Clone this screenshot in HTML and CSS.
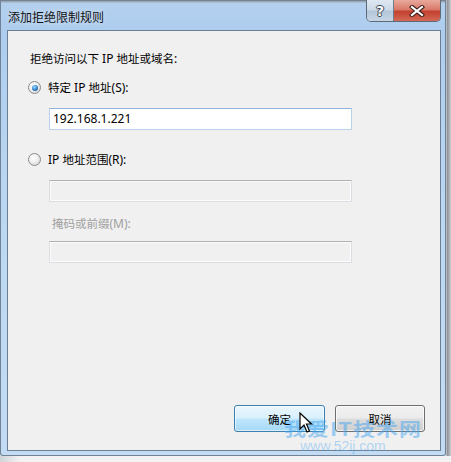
FILE: index.html
```html
<!DOCTYPE html>
<html lang="zh-CN">
<head>
<meta charset="utf-8">
<title>添加拒绝限制规则</title>
<link rel="stylesheet" href="styles.css">
</head>
<body>
<div class="desk">
  <div class="window">
    <div class="titlebar">
      <span class="title">添加拒绝限制规则</span>
      <div class="caption-btns">
        <div class="cbtn help">?</div>
        <div class="cbtn close">
          <svg width="16" height="12" viewBox="0 0 16 12">
            <path d="M3 2 L13 10 M13 2 L3 10" stroke="#3b1d1a" stroke-width="4.2" stroke-linecap="square"/>
            <path d="M3 2 L13 10 M13 2 L3 10" stroke="#ffffff" stroke-width="2.2" stroke-linecap="square"/>
          </svg>
        </div>
      </div>
    </div>
    <div class="client">
      <div class="heading"><span class="c">拒绝访问以下</span> IP <span class="c">地址或域名</span>:</div>
      <div class="radio-row"><span class="radio checked"></span><span><span class="c">特定</span> IP <span class="c">地址</span>(S):</span></div>
      <div class="input focused">192.168.1.221</div>
      <div class="radio-row r2"><span class="radio"></span><span>IP <span class="c">地址范围</span>(R):</span></div>
      <div class="input disabled"></div>
      <div class="sublabel"><span class="c">掩码或前缀</span>(M):</div>
      <div class="input disabled d3"></div>
      <div class="buttons">
        <div class="btn default"><span class="c">确定</span></div>
        <div class="btn cancel"><span class="c">取消</span></div>
      </div>
    </div>
    <div class="watermark">
      <span class="wm-big">我爱IT技术网</span>
      <span class="wm-small">www.52ij.com</span>
    </div>
    <svg class="cursor" width="14" height="21" viewBox="0 0 14 21">
      <path d="M1 1 L1 17 L5 13 L8 20 L10.5 19 L7.5 12 L12.5 12 Z" fill="#ffffff" stroke="#000000" stroke-width="1.2" stroke-linejoin="miter"/>
    </svg>
  </div>
  <div class="below"></div>
</div>
</body>
</html>
```

FILE: styles.css
```css
html, body {
  margin: 0;
  padding: 0;
}
body {
  width: 451px;
  height: 462px;
  overflow: hidden;
  background: #e4e7ea;
  font-family: "Noto Sans", "Noto Sans CJK SC", sans-serif;
  font-size: 12px;
  color: #000;
}
.c {
  font-family: "Noto Sans CJK SC", sans-serif;
  font-size: 11.5px;
}
.desk {
  position: relative;
  width: 451px;
  height: 462px;
  background: linear-gradient(90deg, #e4e7ea 0, #e4e7ea 446px, #8a8f95 447px, #c9ccd0 451px);
}
.window {
  position: relative;
  width: 446px;
  height: 456px;
  display: flex;
  flex-direction: column;
  border-radius: 0 0 3px 3px;
  background: linear-gradient(180deg, #9ea9b4 0, #9ea9b4 2px, #b3d0ee 3px, #aecdee 30px, #bdd8f2 240px, #c3dcf3 456px);
  box-shadow: 0 0 0 1px #6f8296 inset;
}
.titlebar {
  height: 30px;
  display: flex;
  align-items: flex-start;
  padding-left: 8px;
}
.title {
  margin-top: 9px;
  line-height: 16px;
  font-family: "Noto Sans CJK SC", sans-serif;
  font-size: 12px;
  color: #111;
  text-shadow: 0 0 6px rgba(255,255,255,0.6);
}
.caption-btns {
  margin-left: auto;
  margin-right: 5px;
  display: flex;
  height: 21px;
  border: 1px solid #5e6a78;
  border-top: none;
  border-radius: 0 0 5px 5px;
  overflow: hidden;
}
.cbtn {
  height: 21px;
  display: flex;
  align-items: center;
  justify-content: center;
}
.help {
  width: 26px;
  border-right: 1px solid #6e7d8e;
  background: linear-gradient(180deg, #dfe8f2 0, #ccd9e7 45%, #b4c6da 55%, #c6d6e6 100%);
  color: #fff;
  font-family: "DejaVu Sans", sans-serif;
  font-weight: bold;
  font-size: 14px;
  text-shadow: -1px 0 #3a4552, 1px 0 #3a4552, 0 -1px #3a4552, 0 1px #3a4552;
}
.close {
  width: 46px;
  background: linear-gradient(180deg, #e9a99c 0, #d97a6a 45%, #c4402f 55%, #d36a56 100%);
}
.client {
  margin: 0 5px 0 7px;
  height: 421px;
  box-sizing: border-box;
  border: 1px solid #6b7e93;
  background: #f0f0f0;
  display: flex;
  flex-direction: column;
  align-items: flex-start;
  padding: 0 15px 0 20px;
}
.heading {
  margin-top: 19px;
  padding-left: 2px;
  line-height: 16px;
}
.radio-row {
  margin-top: 12px;
  display: flex;
  align-items: center;
  gap: 7px;
  line-height: 16px;
}
.radio-row.r2 {
  margin-top: 21px;
}
.radio {
  width: 11px;
  height: 11px;
  border-radius: 50%;
  border: 1px solid #8b8c8e;
  background: radial-gradient(circle at 40% 35%, #ffffff 0, #f2f2f2 40%, #c9c9c9 100%);
  position: relative;
}
.radio.checked::after {
  content: "";
  position: absolute;
  left: 2.5px;
  top: 2.5px;
  width: 6px;
  height: 6px;
  border-radius: 50%;
  background: radial-gradient(circle at 40% 35%, #a8dcfb 0, #3c8fd6 45%, #0f3f78 100%);
}
.input {
  margin-top: 12px;
  margin-left: 21px;
  width: 303px;
  height: 22px;
  box-sizing: border-box;
  padding-left: 3px;
  line-height: 20px;
  font-size: 12px;
  background: #fff;
}
.input.focused {
  border: 1px solid #b9d2ec;
  border-top-color: #8fb2d8;
}
.input.disabled {
  border: 1px solid #dcdde3;
  border-top-color: #b0b0b0;
  background: #f0f0f0;
  box-shadow: inset 0 0 0 1px #fbfbfb;
}
.input.d3 {
  margin-top: 9px;
}
.sublabel {
  margin-top: 13px;
  padding-left: 24px;
  line-height: 16px;
  color: #a0a0a0;
}
.buttons {
  margin-top: auto;
  margin-bottom: 18px;
  align-self: stretch;
  display: flex;
  justify-content: flex-end;
  gap: 10px;
}
.btn {
  height: 27px;
  box-sizing: border-box;
  border-radius: 3px;
  display: flex;
  align-items: center;
  justify-content: center;
  font-size: 12px;
}
.btn.default {
  width: 91px;
  border: 1px solid #3c7fb1;
  background: linear-gradient(180deg, #eaf6fd 0, #d9f0fc 48%, #bee6fd 52%, #a7d9f5 100%);
  box-shadow: inset 0 0 0 1px rgba(255,255,255,0.6);
}
.btn.cancel {
  width: 90px;
  border: 1px solid #707070;
  background: linear-gradient(180deg, #f2f2f2 0, #ebebeb 48%, #dddddd 52%, #cfcfcf 100%);
  box-shadow: inset 0 0 0 1px rgba(255,255,255,0.7);
}
.watermark {
  position: absolute;
  left: 283px;
  top: 417px;
  width: 140px;
  display: flex;
  flex-direction: column;
  align-items: center;
  pointer-events: none;
}
.wm-big {
  font-family: "Noto Sans CJK SC", sans-serif;
  font-weight: bold;
  font-size: 22px;
  line-height: 20px;
  height: 20px;
  letter-spacing: 1px;
  color: rgba(70, 165, 240, 0.5);
  transform: scaleY(0.85);
}
.wm-small {
  font-family: "Liberation Sans", sans-serif;
  font-size: 14px;
  line-height: 10px;
  margin-top: 4px;
  color: rgba(90, 175, 240, 0.45);
  margin-left: -20px;
}
.cursor {
  position: absolute;
  left: 299px;
  top: 412px;
}
.below {
  height: 6px;
  background: linear-gradient(90deg, #d0d4d8 0, #f2f2f2 20px, #f2f2f2 446px);
}
```
